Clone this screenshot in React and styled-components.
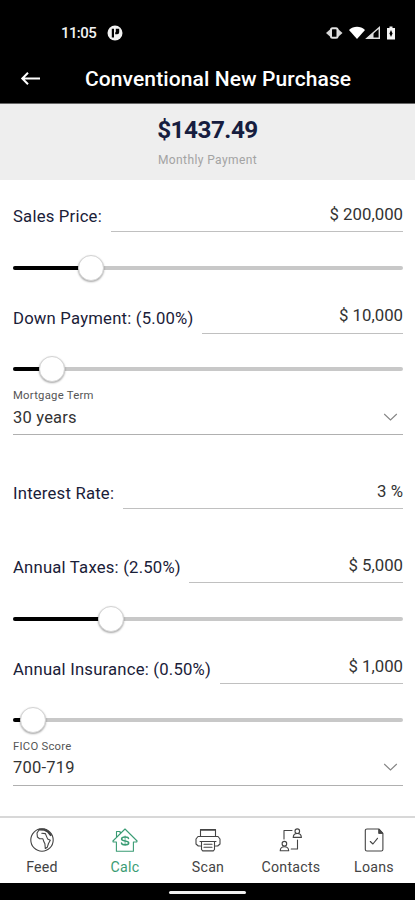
import React, { useState } from "react";
import styled, { createGlobalStyle } from "styled-components";

const GlobalStyle = createGlobalStyle`
  * {
    box-sizing: border-box;
  }

  body {
    margin: 0;
    background: #fff;
    font-family: Roboto, "Noto Sans", sans-serif;
  }
`;

const Screen = styled.div`
  display: flex;
  flex-direction: column;
  width: 415px;
  height: 900px;
  overflow: hidden;
  background: #fff;
`;

const StatusBar = styled.div`
  display: flex;
  align-items: center;
  height: 55px;
  padding: 11px 17px 0 61px;
  background: #000;
  color: #f2f2f2;
`;

const Clock = styled.span`
  width: 46px;
  font-size: 15px;
  font-weight: 500;
  line-height: 20px;
  letter-spacing: -0.6px;
`;

const StatusIcons = styled.div`
  display: flex;
  align-items: center;
  margin-left: auto;
`;

const Header = styled.header`
  display: flex;
  align-items: center;
  height: 49px;
  padding: 0 20px;
  background: #000;
  border-bottom: 1px solid #666;
  color: #fff;
`;

const Title = styled.h1`
  margin: 0 0 0 44px;
  font-size: 21px;
  font-weight: 500;
  line-height: 24px;
  letter-spacing: 0.1px;
  white-space: nowrap;
`;

const Summary = styled.section`
  display: flex;
  flex-direction: column;
  align-items: center;
  height: 76px;
  padding-top: 11px;
  background: #eee;
`;

const Amount = styled.div`
  font-size: 24.3px;
  font-weight: 700;
  line-height: 29px;
  letter-spacing: -0.5px;
  color: #161d3f;
`;

const Caption = styled.div`
  margin-top: 8px;
  font-size: 12px;
  line-height: 16px;
  letter-spacing: 0.4px;
  color: #a3a3a3;
`;

const Form = styled.main`
  flex: 1;
  padding: 0 12px 0 13px;
`;

const FieldRow = styled.div`
  display: flex;
  height: ${({ $spaced }) => ($spaced ? "73.8px" : "52px")};
  padding-top: ${({ $spaced }) => ($spaced ? "21.8px" : "0")};
`;

const Label = styled.label`
  padding-top: 27.4px;
  margin-right: 8.6px;
  font-size: 16.7px;
  line-height: 20px;
  letter-spacing: 0.2px;
  white-space: nowrap;
  color: #1a2038;
`;

const Value = styled.div`
  flex: 1;
  padding-top: 23.8px;
  border-bottom: 1px solid #c0c0c0;
  font-size: 16.8px;
  line-height: 20px;
  text-align: right;
  color: #333;
`;

const SliderBox = styled.div`
  display: flex;
  align-items: center;
  height: 49.6px;
  padding-top: 22px;
`;

const Track = styled.div`
  display: flex;
  align-items: center;
  width: 100%;
  height: 4px;
  border-radius: 2px;
  background: #c8c8c8;
`;

const Filled = styled.div`
  height: 4px;
  border-radius: 2px 0 0 2px;
  background: #000;
`;

const Thumb = styled.div`
  flex: none;
  width: 26px;
  height: 26px;
  margin-left: -13px;
  border: 1px solid #d4d4d4;
  border-radius: 50%;
  background: #fff;
  box-shadow: 0 1px 2px rgba(0, 0, 0, 0.35);
`;

const SelectBox = styled.div`
  height: 52px;
  padding-top: 5px;
  border-bottom: 1px solid #b0b0b0;
`;

const SelectLabel = styled.div`
  font-size: 11.3px;
  line-height: 16px;
  letter-spacing: 0.25px;
  color: #555;
`;

const SelectValue = styled.div`
  display: flex;
  align-items: center;
  justify-content: space-between;
  height: 26px;
  padding-right: 5px;
  font-size: 16.5px;
  letter-spacing: 0.2px;
  color: #333;
`;

const TabBar = styled.nav`
  display: grid;
  grid-template-columns: repeat(5, 83px);
  height: 67px;
  border-top: 2px solid #d8d8d8;
  background: #fff;
`;

const Tab = styled.button`
  display: flex;
  flex-direction: column;
  align-items: center;
  padding: 9px 0 0 1px;
  border: 0;
  background: none;
  font-family: inherit;
  font-size: 14.2px;
  line-height: 18px;
  letter-spacing: 0.25px;
  color: ${({ $active }) => ($active ? "#3a9c74" : "#444")};
  cursor: pointer;

  svg {
    margin-bottom: 5px;
  }
`;

const HomeBar = styled.div`
  display: flex;
  align-items: center;
  justify-content: center;
  height: 17px;
  padding-top: 2px;
  background: #000;

  span {
    width: 77px;
    height: 3px;
    border-radius: 2px;
    background: #f0f0f0;
  }
`;

const Icon = ({ children }) => (
  <svg
    width="26"
    height="26"
    viewBox="0 0 26 26"
    fill="none"
    stroke="currentColor"
    strokeWidth="1.1"
    strokeLinecap="round"
    strokeLinejoin="round"
  >
    {children}
  </svg>
);

const GlobeIcon = () => (
  <Icon>
    <circle cx="13" cy="13" r="11.2" />
    <path d="M10 3L8 6l.4 4 2.200 1.800h3.300l1 3 1 2 .4 4.700 2-1.300 1.200-3.700 1.800-3.200-2.600-1.200-1.300-3-1-2.500-3.600-.4" />
    <path d="M10.500 2.500l5 .2 3.400 1.900 2.800 3.400" strokeWidth="2.200" />
  </Icon>
);

const HouseIcon = () => (
  <Icon>
    <path d="M4.500 10.500V4.500h3.600v2.400M4.400 15H1.200L.9 14 13 2l12.100 12-.4 1h-3.300v9.200h-17z" />
    <path d="M16.500 11.600c0-1.300-1.500-1.700-3.400-1.700s-3.500.5-3.500 2c0 2.900 7.100 1.100 7.100 4 0 1.400-1.700 1.900-3.600 1.900s-3.600-.5-3.600-1.800" strokeWidth="1.500" />
    <path d="M13.100 9v9.600" strokeWidth="0.700" />
  </Icon>
);

const PrinterIcon = () => (
  <Icon>
    <path d="M5.500 9.500V2.500h15v7" />
    <path d="M6 3h14" strokeWidth="1.600" />
    <path d="M5.500 19H3.300L1 17v-5l2-2.500h20l2 2.500v5l-2.300 2h-2.200" />
    <path d="M5 14.500h16M6.500 14.500v8l1.200 1.400h10.600l1.200-1.400v-8M9 17.300h8M9 20.300h8" />
  </Icon>
);

const ContactsIcon = () => (
  <Icon>
    <circle cx="19.300" cy="4.200" r="2.300" />
    <path d="M15.200 10.400c.1-2.400 1.500-3.900 4.100-3.900s4 1.500 4.100 3.900z" />
    <circle cx="6.400" cy="16.700" r="2.300" />
    <path d="M2.200 23.700c.1-2.700 1.700-4 4.200-4s4.200 1.300 4.300 4z" />
    <path d="M14 3.500H6v8.500M19.500 13v9h-6.300" />
  </Icon>
);

const LoansIcon = () => (
  <Icon>
    <path d="M17.800 2H6Q4.300 2 4.300 3.600V22.400Q4.300 24 6 24h14.300q1.600 0 1.600-1.600V6.300zM17.800 2v4.300h4.100" />
    <path d="M18.200 2.600l3.300 3.500h-3.300z" fill="currentColor" />
    <path d="M9.300 14.500l2.600 2.500 4.600-5.700" />
  </Icon>
);

const Chevron = () => (
  <svg width="15" height="9" viewBox="0 0 15 9" fill="none" stroke="#858585" strokeWidth="1.100">
    <path d="M1.200 1l6.300 6 6.300-6" />
  </svg>
);

const BackArrow = () => (
  <svg width="21" height="16" viewBox="0 0 21 16" fill="none" stroke="currentColor" strokeWidth="2">
    <path d="M20 7.500H2.500M8 1.800L2.300 7.500 8 13.200" />
  </svg>
);

const AppBadge = () => (
  <svg width="16" height="16" viewBox="0 0 16 16">
    <circle cx="8" cy="8" r="7.500" fill="#f2f2f2" />
    <path d="M4.800 3.800H7V12.500H4.800zM8.800 3.800h3.400v3.400q0 2-2 2H8.200V7.300h.6z" fill="#000" />
  </svg>
);

const PhoneStatus = () => (
  <svg width="72" height="18" viewBox="0 0 72 18">
    {/* vibrate */}
    <path d="M0 9l4.500-4v8zM16.500 9L12 5v8z" fill="#d6d6d6" />
    <rect x="5" y="4.300" width="6.500" height="9.400" rx="1.500" fill="#000" stroke="#e0e0e0" strokeWidth="2" />
    {/* wifi */}
    <path d="M23 6C27.500 1.800 34.500 1.800 39 6L31 15z" fill="#fff" />
    {/* mobile signal */}
    <path d="M41 14.300L53.300 3.500v10.800z" fill="none" stroke="#ddd" strokeWidth="1.400" />
    <path d="M41 14.300l6.500-6v6z" fill="#ddd" />
    {/* battery */}
    <path d="M61 4h2.500V2.500h3V4H69v11.500h-8z" fill="#f5f5f5" />
    <path d="M65 6l1.500 3.500L65 13l-1.500-3.500z" fill="#000" />
  </svg>
);

const tabs = [
  { name: "Feed", icon: <GlobeIcon /> },
  { name: "Calc", icon: <HouseIcon /> },
  { name: "Scan", icon: <PrinterIcon /> },
  { name: "Contacts", icon: <ContactsIcon /> },
  { name: "Loans", icon: <LoansIcon /> },
];

const Field = ({ label, value, spaced }) => (
  <FieldRow $spaced={spaced}>
    <Label>{label}</Label>
    <Value>{value}</Value>
  </FieldRow>
);

const Slider = ({ percent }) => (
  <SliderBox>
    <Track>
      <Filled style={{ width: `${percent}%` }} />
      <Thumb />
    </Track>
  </SliderBox>
);

const Select = ({ label, value }) => (
  <SelectBox>
    <SelectLabel>{label}</SelectLabel>
    <SelectValue>
      {value}
      <Chevron />
    </SelectValue>
  </SelectBox>
);

const App = () => {
  const [active, setActive] = useState("Calc");

  return (
    <>
      <GlobalStyle />
      <Screen>
        <StatusBar>
          <Clock>11:05</Clock>
          <AppBadge />
          <StatusIcons>
            <PhoneStatus />
          </StatusIcons>
        </StatusBar>

        <Header>
          <BackArrow />
          <Title>Conventional New Purchase</Title>
        </Header>

        <Summary>
          <Amount>$1437.49</Amount>
          <Caption>Monthly Payment</Caption>
        </Summary>

        <Form>
          <Field label="Sales Price:" value="$ 200,000" />
          <Slider percent={20} />
          <Field label="Down Payment: (5.00%)" value="$ 10,000" />
          <Slider percent={10} />
          <Select label="Mortgage Term" value="30 years" />
          <Field label="Interest Rate:" value="3 %" spaced />
          <Field label="Annual Taxes: (2.50%)" value="$ 5,000" spaced />
          <Slider percent={25} />
          <Field label="Annual Insurance: (0.50%)" value="$ 1,000" />
          <Slider percent={5} />
          <Select label="FICO Score" value="700-719" />
        </Form>

        <TabBar>
          {tabs.map(({ name, icon }) => (
            <Tab key={name} $active={name === active} onClick={() => setActive(name)}>
              {icon}
              {name}
            </Tab>
          ))}
        </TabBar>

        <HomeBar>
          <span />
        </HomeBar>
      </Screen>
    </>
  );
};

export default App;
